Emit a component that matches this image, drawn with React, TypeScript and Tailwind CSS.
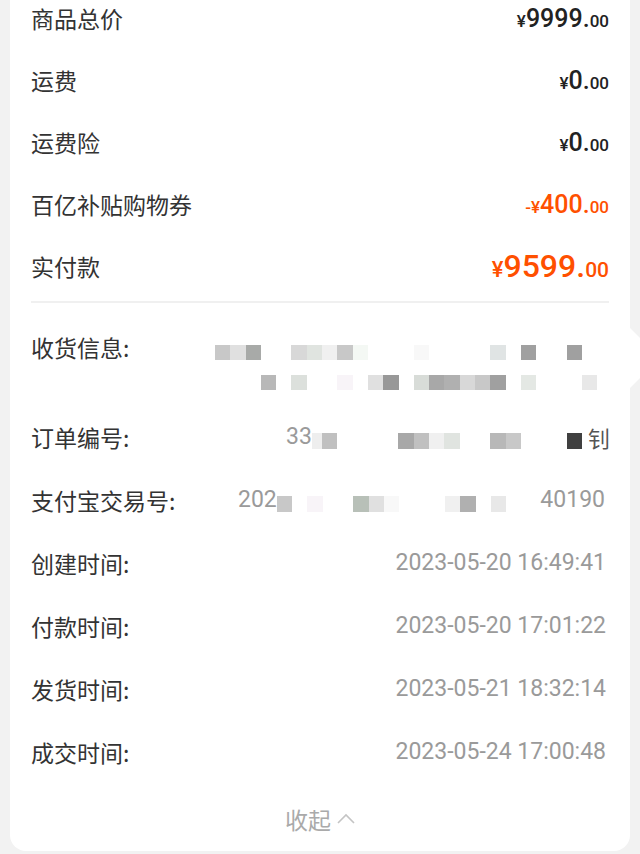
import React from "react";

const labelCls =
  "font-['Noto_Sans_CJK_SC',sans-serif] text-[23px] leading-[30px] text-[#333] whitespace-nowrap";
const valCls =
  "font-['Roboto',sans-serif] text-[23px] leading-[30px] text-[#9a9a9a] whitespace-nowrap";

const W = "bg-transparent";

const addr1 = [
  "bg-[#c8c8c8]", "bg-[#e0e0e0]", "bg-[#a8aaa8]", W, W,
  "bg-[#d8d8d8]", "bg-[#e0e4e0]", "bg-[#f0f0f0]", "bg-[#c8c8c8]", "bg-[#f4f8f4]",
  W, W, W, "bg-[#f8f8f8]", W,
  W, W, W, "bg-[#e0e4e4]", W,
  "bg-[#a0a0a0]", W, W, "bg-[#a0a0a0]",
];
const addr2 = [
  W, W, W, "bg-[#b8b8b8]", W,
  "bg-[#dce0dc]", W, W, "bg-[#f8f4f8]", W,
  "bg-[#e0e0e0]", "bg-[#989898]", W, "bg-[#d8dcd8]", "bg-[#a8a8a8]",
  "bg-[#b0b0b0]", "bg-[#d8d8d8]", "bg-[#c8c8c8]", "bg-[#a0a0a0]", W,
  "bg-[#e4e8e4]", W, W, W, "bg-[#e8e8e8]",
];
const orderCells = [
  "bg-[#c0c0c0]", W, W, W, W,
  "bg-[#a8a8a8]", "bg-[#c0c0c0]", "bg-[#f0f0f0]", "bg-[#e0e4e0]", W,
  W, "bg-[#b8b8b8]", "bg-[#c8c8c8]", W, W,
  W, "bg-[#404040]",
];
const payCells = [
  "bg-[#c8c8c8]", W, "bg-[#f8f4f8]", W, W,
  "bg-[#b8c0b8]", "bg-[#e0e0e0]", "bg-[#f8f8f8]", W, W,
  W, "bg-[#f0f0f0]", "bg-[#b0b0b0]", W, "bg-[#e8e8e8]",
];

function Cells({ cells, h = "h-[15px]" }: { cells: string[]; h?: string }) {
  return (
    <div className="flex">
      {cells.map((c, i) => (
        <div key={i} className={"w-[15.3px] shrink-0 " + h + " " + c} />
      ))}
    </div>
  );
}

function Price({
  sign,
  int,
  dec,
  big,
  orange,
}: {
  sign: string;
  int: string;
  dec: string;
  big?: boolean;
  orange?: boolean;
}) {
  const color = orange ? "text-[#ff5000]" : "text-[#222]";
  return (
    <span
      className={
        "font-['Roboto',sans-serif] font-medium whitespace-nowrap leading-none " + color
      }
    >
      <span className={big ? "text-[22px]" : "text-[17px]"}>{sign}</span>
      <span className={big ? "text-[32px]" : "text-[25px]"}>{int}</span>
      <span className={big ? "text-[21px]" : "text-[17px]"}>{dec}</span>
    </span>
  );
}

function TopRow({ label, children }: { label: string; children: React.ReactNode }) {
  return (
    <div className="flex h-[62px] items-center justify-between">
      <span className={labelCls}>{label}</span>
      {children}
    </div>
  );
}

function TimeRow({ label, value }: { label: string; value: string }) {
  return (
    <div className="flex h-[63px] items-center justify-between">
      <span className={labelCls}>{label}</span>
      <span className={valCls + " pr-[3px]"}>{value}</span>
    </div>
  );
}

export default function App() {
  return (
    <div className="relative w-[640px] h-[854px] overflow-hidden bg-[#f2f2f2] px-[10px]">
      <div className="w-[620px] h-[851px] overflow-hidden rounded-b-[16px] bg-white px-[21px]">
        <div className="-mt-[13px]">
          <TopRow label="商品总价">
            <Price sign="¥" int="9999." dec="00" />
          </TopRow>
          <TopRow label="运费">
            <Price sign="¥" int="0." dec="00" />
          </TopRow>
          <TopRow label="运费险">
            <Price sign="¥" int="0." dec="00" />
          </TopRow>
          <TopRow label="百亿补贴购物券">
            <Price sign="-¥" int="400." dec="00" orange />
          </TopRow>
          <TopRow label="实付款">
            <Price sign="¥" int="9599." dec="00" big orange />
          </TopRow>
          <div className="mt-[4px] h-[2px] bg-[#f0f0f0]" />

          {/* 收货信息 */}
          <div className="flex h-[103px] pt-[29px]">
            <div className={"w-[184px] shrink-0 " + labelCls}>收货信息:</div>
            <div className="flex flex-col gap-[15px] pt-[13px]">
              <Cells cells={addr1} />
              <Cells cells={addr2} />
            </div>
          </div>

          {/* 订单编号 */}
          <div className="flex h-[62px] items-center">
            <div className={"w-[255px] shrink-0 " + labelCls}>订单编号:</div>
            <span className={valCls + " w-[26px] shrink-0"}>33</span>
            <div className="mt-[8px] flex">
              <div className="w-[10px] h-[16px] bg-[#eeeeee]" />
              <Cells cells={orderCells} h="h-[16px]" />
            </div>
            <span className="ml-[6px] font-['Noto_Sans_CJK_SC',sans-serif] text-[22px] leading-[30px] text-[#555]">
              钊
            </span>
          </div>

          {/* 支付宝交易号 */}
          <div className="flex h-[63px] items-center">
            <div className={"w-[207px] shrink-0 " + labelCls}>支付宝交易号:</div>
            <span className={valCls + " shrink-0"}>202</span>
            <div className="mt-[8px]">
              <Cells cells={payCells} h="h-[16px]" />
            </div>
            <span className={valCls + " ml-auto pr-[4px]"}>40190</span>
          </div>

          <TimeRow label="创建时间:" value="2023-05-20 16:49:41" />
          <TimeRow label="付款时间:" value="2023-05-20 17:01:22" />
          <TimeRow label="发货时间:" value="2023-05-21 18:32:14" />
          <TimeRow label="成交时间:" value="2023-05-24 17:00:48" />

          <div className="flex h-[65px] items-center justify-center gap-[6px] pt-[7px]">
            <span className="font-['Noto_Sans_CJK_SC',sans-serif] text-[23px] leading-[30px] text-[#aaa]">
              收起
            </span>
            <svg width="18" height="11" viewBox="0 0 18 11" className="mt-[-2px]">
              <polyline
                points="1,10 9,2 17,10"
                fill="none"
                stroke="#c4c4c4"
                strokeWidth="1.6"
              />
            </svg>
          </div>
        </div>
      </div>

      <svg
        width="10"
        height="60"
        viewBox="0 0 10 60"
        className="absolute left-[630px] top-[328px]"
      >
        <polygon points="0,0 10,10 10,50 0,60" fill="#ffffff" />
      </svg>
    </div>
  );
}
